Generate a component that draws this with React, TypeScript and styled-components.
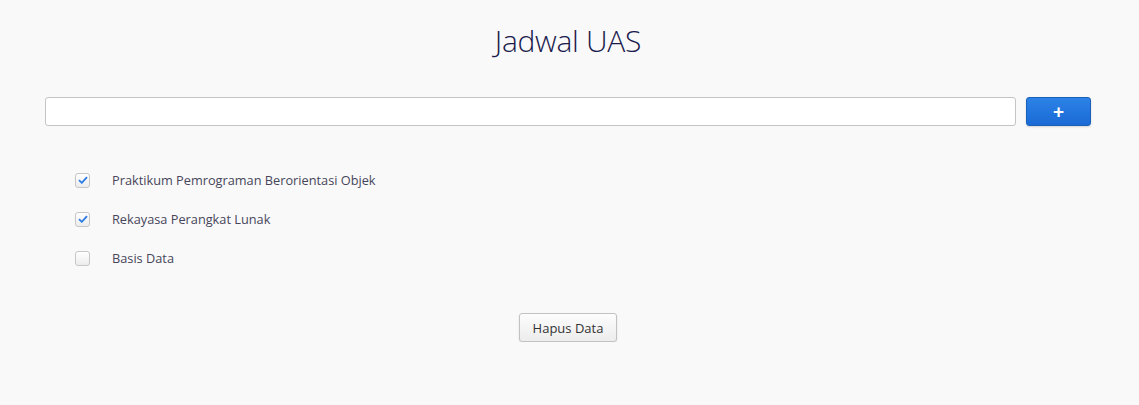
import { createGlobalStyle, styled } from "styled-components";
import { useState } from "react";

const GlobalStyle = createGlobalStyle`
  html, body {
    margin: 0;
    background: #f9f9f9;
    font-family: "Open Sans", "Liberation Sans", sans-serif;
  }
`;

const Page = styled.div`
  padding: 18px 48px 0 45px;
`;

const Title = styled.h1`
  margin: 0;
  text-align: center;
  font-size: 30px;
  font-weight: 300;
  color: #1b1b4d;
  line-height: 46px;
  letter-spacing: -0.3px;
`;

const AddRow = styled.form`
  display: flex;
  gap: 10px;
  margin-top: 33px;
`;

const TextInput = styled.input`
  flex: 1;
  height: 29px;
  box-sizing: border-box;
  border: 1px solid #c4c4c4;
  border-radius: 3px;
  background: #fff;
  padding: 0 8px;
  font: inherit;
`;

const AddButton = styled.button`
  width: 65px;
  height: 29px;
  border: 1px solid #1a5fb8;
  border-radius: 3px;
  background: linear-gradient(#2c82e6, #1a6ad6);
  color: #fff;
  font-size: 19px;
  font-weight: 800;
  line-height: 1;
  display: flex;
  align-items: center;
  justify-content: center;
  box-shadow: 0 1px 2px rgba(0, 0, 0, 0.15);
`;

const List = styled.ul`
  list-style: none;
  margin: 46px 0 0 30px;
  padding: 0;
  display: flex;
  flex-direction: column;
  gap: 23px;
`;

const Item = styled.li`
  display: flex;
  align-items: center;
  gap: 22px;
  height: 16px;
  font-size: 12.75px;
  color: #46465a;
`;

const Box = styled.span<{ $checked: boolean }>`
  width: 15px;
  height: 15px;
  box-sizing: border-box;
  border: 1px solid #c6c6c6;
  border-radius: 3px;
  background: linear-gradient(#ffffff, #ececec);
  display: flex;
  align-items: center;
  justify-content: center;
  cursor: pointer;
  svg {
    visibility: ${(p) => (p.$checked ? "visible" : "hidden")};
  }
`;

const Footer = styled.div`
  display: flex;
  justify-content: center;
  margin-top: 47px;
`;

const ClearButton = styled.button`
  width: 98px;
  height: 29px;
  border: 1px solid #c2c2c2;
  border-radius: 3px;
  background: linear-gradient(#fdfdfd, #ececec);
  font-family: inherit;
  font-size: 13px;
  color: #333;
  box-shadow: 0 1px 2px rgba(0, 0, 0, 0.12);
`;

export default function App() {
  const [items, setItems] = useState([
    { name: "Praktikum Pemrograman Berorientasi Objek", done: true },
    { name: "Rekayasa Perangkat Lunak", done: true },
    { name: "Basis Data", done: false },
  ]);

  const toggle = (i: number) =>
    setItems(items.map((it, j) => (j === i ? { ...it, done: !it.done } : it)));

  return (
    <Page>
      <GlobalStyle />
      <Title>Jadwal UAS</Title>
      <AddRow onSubmit={(e) => e.preventDefault()}>
        <TextInput type="text" />
        <AddButton type="submit">+</AddButton>
      </AddRow>
      <List>
        {items.map((it, i) => (
          <Item key={it.name}>
            <Box $checked={it.done} onClick={() => toggle(i)}>
              <svg width="10" height="8" viewBox="0 0 10 8">
                <path d="M1 4.2 L3.8 6.8 L9 1.2" fill="none" stroke="#2a7ae4" strokeWidth="1.8" />
              </svg>
            </Box>
            {it.name}
          </Item>
        ))}
      </List>
      <Footer>
        <ClearButton onClick={() => setItems(items.filter((it) => !it.done))}>Hapus Data</ClearButton>
      </Footer>
    </Page>
  );
}
